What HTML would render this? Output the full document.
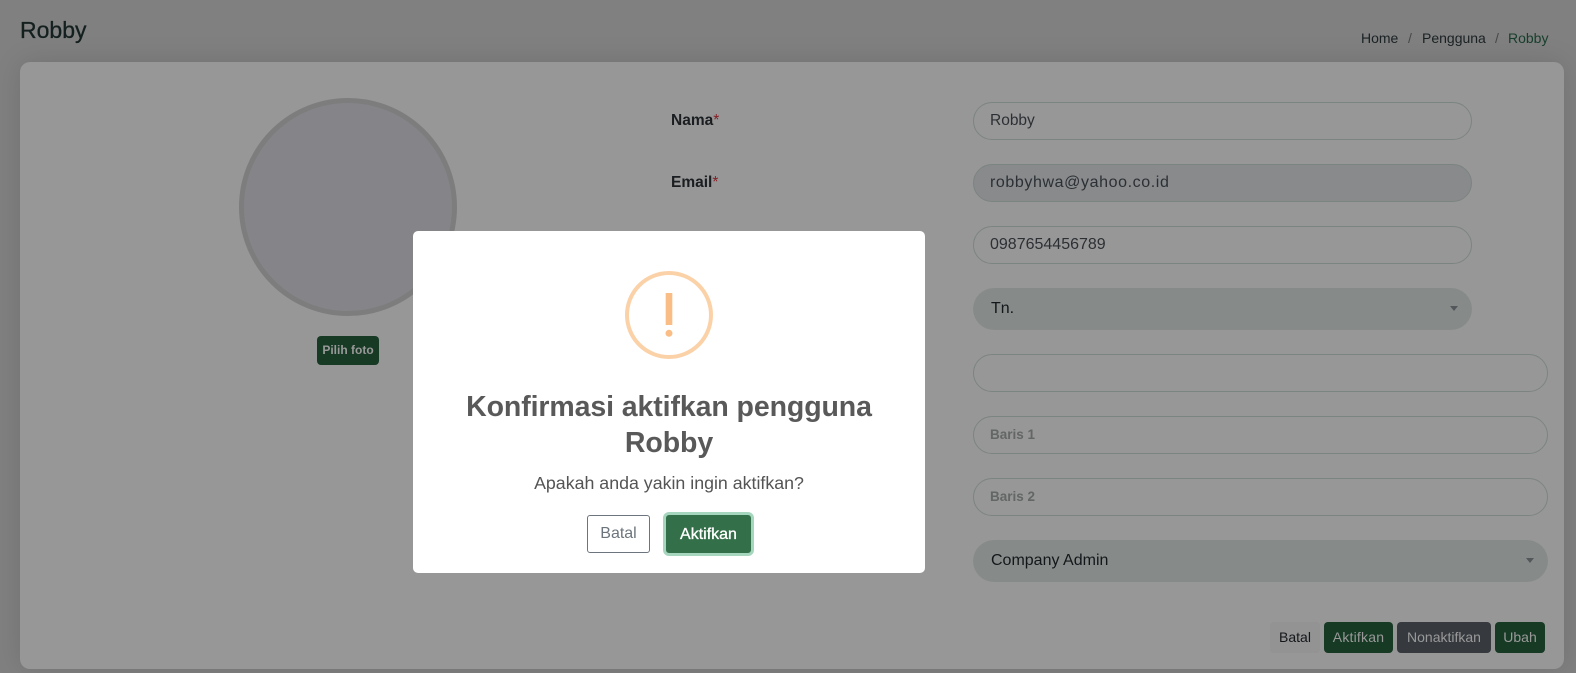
<!DOCTYPE html>
<html>
<head>
<meta charset="utf-8">
<style>
*{box-sizing:border-box}
html,body{margin:0;padding:0;width:1576px;height:673px;overflow:hidden;background:#808080;font-family:"Liberation Sans",sans-serif}
.a{position:absolute;white-space:nowrap}
.card{left:20px;top:62px;width:1544px;height:607px;background:#979797;border-radius:10px;box-shadow:0 0 28px rgba(0,0,0,.12)}
.inp{position:absolute;height:38px;border:1px solid #7c8481;border-radius:19px;font-size:16px;line-height:35px;padding-left:16px;color:#2c3034}
.sel{position:absolute;height:42px;background:#868b89;border-radius:21px;font-size:16px;line-height:42px;padding-left:18px;color:#14171a}
.arr{position:absolute;width:0;height:0;border-left:4px solid transparent;border-right:4px solid transparent;border-top:5px solid #54575a}
.lab{font-size:15.5px;font-weight:bold;color:#1b1e21;line-height:20px}
.lab span{color:#842027;font-weight:normal}
.ph{font-size:13.5px;font-weight:bold;line-height:36px}
.btn{position:absolute;top:622px;height:31px;border-radius:4px;font-size:14px;line-height:30px;text-align:center}
</style>
</head>
<body>
<div class="a" style="left:20px;top:15px;font-size:23px;line-height:30px;color:#14201f;-webkit-text-stroke:.3px #14201f">Robby</div>
<div class="a" style="left:1361px;top:29px;font-size:14px;line-height:18px;color:#1a2224">Home</div>
<div class="a" style="left:1408px;top:29px;font-size:14px;line-height:18px;color:#45484a">/</div>
<div class="a" style="left:1422px;top:29px;font-size:14px;line-height:18px;color:#1a2224">Pengguna</div>
<div class="a" style="left:1495px;top:29px;font-size:14px;line-height:18px;color:#45484a">/</div>
<div class="a" style="left:1508px;top:29px;font-size:14px;line-height:18px;color:#173f2c">Robby</div>

<div class="a card"></div>

<div class="a" style="left:239px;top:98px;width:218px;height:218px;border-radius:50%;background:#858489;border:5px solid #7d7d7d"></div>
<div class="a" style="left:317px;top:336px;width:62px;height:29px;background:#173a25;border-radius:4px;font-size:12px;font-weight:bold;line-height:28px;text-align:center;color:#999">Pilih foto</div>

<div class="a lab" style="left:671px;top:111px">Nama<span>*</span></div>
<div class="a lab" style="left:671px;top:173px">Email<span>*</span></div>

<div class="inp" style="left:973px;top:102px;width:499px;font-size:15.5px">Robby</div>
<div class="inp" style="left:973px;top:164px;width:499px;background:#888a8c;letter-spacing:.6px">robbyhwa@yahoo.co.id</div>
<div class="inp" style="left:973px;top:226px;width:499px">0987654456789</div>
<div class="sel" style="left:973px;top:288px;width:499px">Tn.</div>
<div class="arr" style="left:1450px;top:306px"></div>
<div class="inp" style="left:973px;top:354px;width:575px"></div>
<div class="inp ph" style="left:973px;top:416px;width:575px;color:#626665">Baris 1</div>
<div class="inp ph" style="left:973px;top:478px;width:575px;color:#626665">Baris 2</div>
<div class="sel" style="left:973px;top:540px;width:575px">Company Admin</div>
<div class="arr" style="left:1526px;top:558px"></div>

<div class="btn" style="left:1270px;width:50px;background:#939393;color:#14171a">Batal</div>
<div class="btn" style="left:1324px;width:69px;background:#173a25;color:#999;letter-spacing:.2px">Aktifkan</div>
<div class="btn" style="left:1397px;width:94px;background:#363a3f;color:#999">Nonaktifkan</div>
<div class="btn" style="left:1495px;width:50px;background:#173a25;color:#999">Ubah</div>

<div class="a" style="left:413px;top:231px;width:512px;height:342px;background:#fff;border-radius:5px"></div>
<svg class="a" style="left:625px;top:271px" width="88" height="88" viewBox="0 0 88 88">
<circle cx="44" cy="44" r="42" fill="none" stroke="#fbd1a8" stroke-width="4"/>
<rect x="40.7" y="22" width="6.6" height="32" fill="#f9bd85"/>
<circle cx="44" cy="62.3" r="3.5" fill="#f9bd85"/>
</svg>
<div class="a" style="left:413px;top:389px;width:512px;text-align:center;font-size:28.5px;font-weight:bold;line-height:36px;color:#595959;letter-spacing:-.1px">Konfirmasi aktifkan pengguna<br>Robby</div>
<div class="a" style="left:413px;top:473px;width:512px;text-align:center;font-size:17.8px;line-height:21px;color:#545454">Apakah anda yakin ingin aktifkan?</div>
<div class="a" style="left:587px;top:515px;width:63px;height:38px;border:1px solid #6c757d;border-radius:3px;background:#fff;font-size:16px;line-height:36px;text-align:center;color:#6c757d">Batal</div>
<div class="a" style="left:663px;top:512px;width:91px;height:44px;background:#33704a;border:3px solid #a6d6bd;border-radius:6px;font-size:16px;line-height:39px;text-align:center;color:#fff;-webkit-text-stroke:.3px #fff">Aktifkan</div>
</body>
</html>
